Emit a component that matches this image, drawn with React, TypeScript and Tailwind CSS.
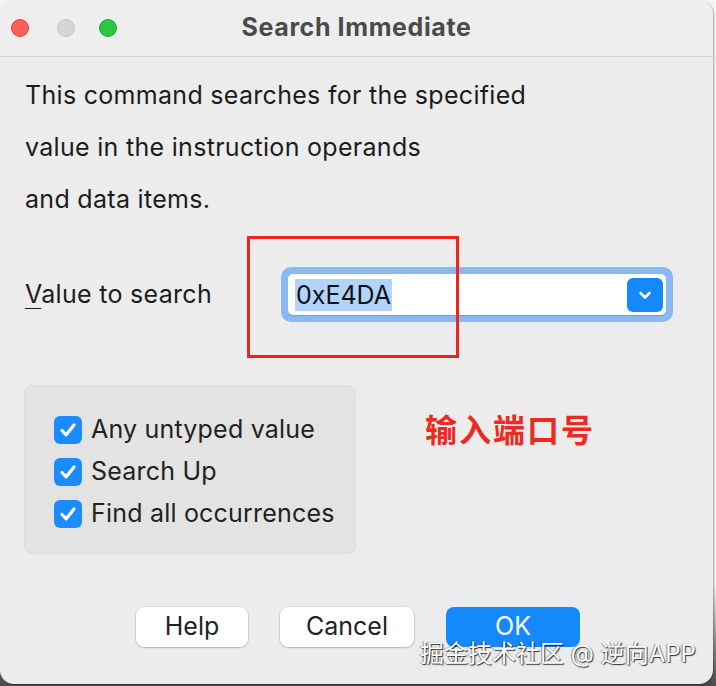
import React from 'react';

const font = { fontFamily: 'Inter, "Noto Sans CJK SC", sans-serif' };

const Check: React.FC<{ label: string }> = ({ label }) => (
    <div className="flex items-center h-[42px]">
        <div className="w-[28px] h-[28px] rounded-[6px] bg-[#1a8cff] flex items-center justify-center shrink-0">
            <svg width="20" height="20" viewBox="0 0 20 20" fill="none">
                <path d="M4 10.5 L8.2 14.8 L16 5" stroke="white" strokeWidth="3.2" strokeLinecap="round" strokeLinejoin="round" />
            </svg>
        </div>
        <span className="ml-[9px] text-[25px] tracking-[0.2px] text-[#222]">{label}</span>
    </div>
);

const Btn: React.FC<{ label: string; primary?: boolean; w: string }> = ({ label, primary, w }) => (
    <div
        className={
            (primary
                ? 'h-[40px] rounded-[8px] bg-[#1489fc] text-white text-[25px] flex items-center justify-center '
                : 'h-[40px] rounded-[8px] bg-white text-[#222] text-[25px] flex items-center justify-center shadow-[0_0_0_1px_rgba(0,0,0,0.06),0_1px_2px_rgba(0,0,0,0.18)] ') + w
        }
    >
        {label}
    </div>
);

const App: React.FC = () => {
    return (
        <div className="w-[716px] h-[686px] bg-[linear-gradient(to_bottom,#f4f4f4_0%,#f4f4f4_85%,#4a4a4a_100%)]" style={font}>
            <div className="relative w-[713px] h-[684px] bg-[#ececec] rounded-[14px] overflow-hidden flex flex-col shadow-[1px_1px_2px_rgba(0,0,0,0.35)]">
                {/* title bar */}
                <div className="relative h-[57px] border-b border-[#d4d4d4] flex items-center bg-[#eeeeee]">
                    <div className="flex items-center gap-[24px] pl-[11px]">
                        <div className="w-[18px] h-[18px] rounded-full bg-[#fe5f57] border border-[#e0443e]" />
                        <div className="w-[18px] h-[18px] rounded-full bg-[#d5d5d7] border border-[#c4c4c6] ml-[4px]" />
                        <div className="w-[18px] h-[18px] rounded-full bg-[#28c840] border border-[#1dad2b]" />
                    </div>
                    <div className="absolute inset-0 flex items-center justify-center text-[25px] tracking-[0.6px] font-bold text-[#4b4b4b]">
                        Search Immediate
                    </div>
                </div>

                {/* description */}
                <div className="pl-[25px] pt-[12px] text-[25px] tracking-[0.3px] text-[#1c1c1c] leading-[52px]">
                    <div>This command searches for the specified</div>
                    <div>value in the instruction operands</div>
                    <div>and data items.</div>
                </div>

                {/* value row */}
                <div className="relative flex items-center mt-[42px] h-[55px]">
                    <div className="pl-[25px] w-[281px] text-[25px] tracking-[0.3px] text-[#1c1c1c]">
                        <span className="underline underline-offset-[5px] decoration-1">V</span>alue to search
                    </div>
                    <div className="w-[392px] h-[55px] rounded-[10px] bg-[#8ab8f3] p-[7px]">
                        <div className="h-full rounded-[5px] bg-white flex items-center pl-[7px] pr-[3px] shadow-[0_1px_1px_rgba(0,0,0,0.15)]">
                            <span className="bg-[#b2d4fb] text-[25px] text-[#111] px-[1px] leading-[32px]">0xE4DA</span>
                            <div className="ml-auto w-[36px] h-[34px] rounded-[6px] bg-[#1588fb] flex items-center justify-center">
                                <svg width="18" height="18" viewBox="0 0 18 18" fill="none">
                                    <path d="M4.5 7 L9 11.5 L13.5 7" stroke="white" strokeWidth="2.6" strokeLinecap="round" strokeLinejoin="round" />
                                </svg>
                            </div>
                        </div>
                    </div>
                    <div className="absolute left-[247px] top-[-31px] w-[212px] h-[122px] border-[3px] border-[#f0241b]" />
                </div>

                {/* options */}
                <div className="flex items-start mt-[63px]">
                    <div className="ml-[24px] w-[332px] h-[169px] rounded-[8px] bg-[#e3e3e3] border border-[#dedede] pl-[29px] pt-[23px]">
                        <Check label="Any untyped value" />
                        <Check label="Search Up" />
                        <Check label="Find all occurrences" />
                    </div>
                    <div className="ml-[69px] mt-[26px] text-[32px] leading-[40px] font-semibold text-[#ec2a20] tracking-[2px]">输入端口号</div>
                </div>

                {/* buttons */}
                <div className="flex items-center mt-[53px] pl-[136px] gap-[32px]">
                    <Btn label="Help" w="w-[112px]" />
                    <Btn label="Cancel" w="w-[134px]" />
                    <Btn label="OK" primary w="w-[134px]" />
                </div>

                <div className="absolute left-[420px] top-[636px] text-[24px] text-white [text-shadow:1px_1px_1px_rgba(0,0,0,0.8),-1px_0_1px_rgba(0,0,0,0.4)]">
                    掘金技术社区 @ 逆向APP
                </div>
            </div>
        </div>
    );
};

export default App;
